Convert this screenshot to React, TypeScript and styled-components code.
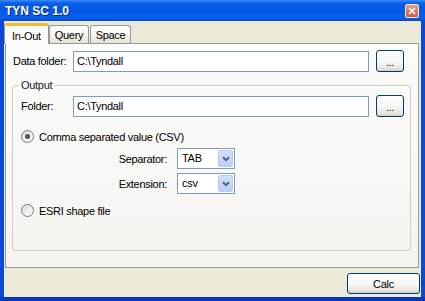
import React from "react";
import styled, { createGlobalStyle } from "styled-components";

const GlobalStyle = createGlobalStyle`
  html, body { margin: 0; padding: 0; background: #fff; }
  body {
    font-family: "Liberation Sans", Arial, sans-serif;
    font-size: 11px;
    letter-spacing: -0.3px;
    color: #000;
  }
  * { box-sizing: border-box; }
`;

const Window = styled.div`
  width: 425px;
  height: 301px;
  display: flex;
  flex-direction: column;
  background: #0a48d8;
  padding: 0 4px 0 4px;
  border-bottom: 4px solid #0637b8;
`;

const TitleBar = styled.div`
  margin: 0 -4px;
  height: 21px;
  display: flex;
  align-items: center;
  justify-content: space-between;
  padding: 0 6px 0 5px;
  background: linear-gradient(180deg, #3d8ef8 0%, #0b5fea 14%, #0355e4 50%, #0860ee 85%, #0448cf 100%);
`;

const Title = styled.span`
  color: #fff;
  font-weight: bold;
  font-size: 12px;
  letter-spacing: 0;
  text-shadow: 1px 1px 0 #0a2a8a;
`;

const CloseButton = styled.div`
  width: 14px;
  height: 14px;
  border: 1px solid #f4e6e0;
  border-radius: 2px;
  background: linear-gradient(180deg, #e7a08a 0%, #d8735a 60%, #c7624a 100%);
  display: flex;
  align-items: center;
  justify-content: center;
`;

const Client = styled.div`
  flex: 1;
  display: flex;
  flex-direction: column;
  background: #ece9d8;
`;

const TabRow = styled.div`
  height: 22px;
  display: flex;
  align-items: flex-end;
`;

const Tab = styled.div<{ $active?: boolean; $w: number; $gap?: number }>`
  width: ${(p) => p.$w}px;
  height: ${(p) => (p.$active ? 21 : 18)}px;
  margin-left: ${(p) => p.$gap ?? 0}px;
  margin-bottom: ${(p) => (p.$active ? -1 : 0)}px;
  position: relative;
  z-index: ${(p) => (p.$active ? 2 : 1)};
  display: flex;
  align-items: center;
  justify-content: center;
  padding-top: ${(p) => (p.$active ? 2 : 1)}px;
  border: 1px solid #919b9c;
  border-bottom: none;
  border-top: ${(p) => (p.$active ? "3px solid #f5b73c" : "1px solid #919b9c")};
  border-radius: 3px 3px 0 0;
  background: ${(p) =>
    p.$active ? "#fcfcfb" : "linear-gradient(180deg, #ffffff 0%, #f3f2ec 60%, #e4e1d4 100%)"};
`;

const Panel = styled.div`
  margin-left: 1px;
  width: 414px;
  height: 225px;
  border: 1px solid #919b9c;
  background: linear-gradient(180deg, #fcfcfb 0%, #f5f4ef 100%);
  padding: 6px 0 0 7px;
`;

const Row = styled.div<{ $top?: number }>`
  display: flex;
  align-items: center;
  margin-top: ${(p) => p.$top ?? 0}px;
`;

const FieldLabel = styled.span<{ $w: number; $right?: boolean; $pad?: number }>`
  width: ${(p) => p.$w}px;
  padding-left: ${(p) => p.$pad ?? 0}px;
  text-align: ${(p) => (p.$right ? "right" : "left")};
  margin-right: ${(p) => (p.$right ? 10 : 0)}px;
`;

const TextBox = styled.div`
  width: 296px;
  height: 21px;
  border: 1px solid #7f9db9;
  background: #fff;
  padding-left: 3px;
  line-height: 19px;
`;

const PushButton = styled.div<{ $w: number; $h: number; $left?: number }>`
  width: ${(p) => p.$w}px;
  height: ${(p) => p.$h}px;
  margin-left: ${(p) => p.$left ?? 0}px;
  border: 1px solid #003c74;
  border-radius: 3px;
  background: linear-gradient(180deg, #ffffff 0%, #f7f7f4 55%, #e8e5dc 85%, #d6d0c5 100%);
  display: flex;
  align-items: center;
  justify-content: center;
`;

const Dots = styled.span`
  font-size: 10px;
  padding-top: 3px;
`;

const Group = styled.fieldset`
  margin: 7px 0 0 -1px;
  width: 399px;
  border: 1px solid #d0d0bf;
  border-radius: 4px;
  padding: 3px 6px 33px 6px;
`;

const Legend = styled.legend`
  padding: 0 2px;
  line-height: 13px;
  color: #1a1a2a;
`;

const RadioRow = styled.div<{ $top: number }>`
  display: flex;
  align-items: center;
  height: 13px;
  margin-top: ${(p) => p.$top}px;
  margin-left: 2px;
  gap: 5px;
`;

const RadioCircle = styled.div<{ $checked?: boolean }>`
  width: 13px;
  height: 13px;
  border-radius: 50%;
  border: 1px solid #6b7e92;
  background: linear-gradient(135deg, #dcdcd7 0%, #ffffff 100%);
  display: flex;
  align-items: center;
  justify-content: center;

  &::after {
    content: "";
    display: ${(p) => (p.$checked ? "block" : "none")};
    width: 5px;
    height: 5px;
    border-radius: 50%;
    background: #4a5f4a;
  }
`;

const SelectBox = styled.div`
  width: 58px;
  height: 21px;
  border: 1px solid #7f9db9;
  background: #fff;
  padding: 1px;
  display: flex;
`;

const SelectValue = styled.span`
  flex: 1;
  padding-left: 3px;
  line-height: 17px;
`;

const ArrowButton = styled.div`
  width: 15px;
  border: 1px solid #b8cbf6;
  border-radius: 2px;
  background: linear-gradient(180deg, #d4e0fc 0%, #bccdf7 100%);
  display: flex;
  align-items: center;
  justify-content: center;
`;

const Footer = styled.div`
  flex: 1;
  display: flex;
  justify-content: flex-end;
  align-items: flex-start;
  padding: 5px 1px 0 0;
`;

const Chevron = () => (
  <svg width="8" height="6" viewBox="0 0 8 6">
    <path d="M1 1.2 L4 4.2 L7 1.2" fill="none" stroke="#4d6185" strokeWidth="2" />
  </svg>
);

const CloseX = () => (
  <svg width="8" height="8" viewBox="0 0 8 8">
    <path d="M1 1 L7 7 M7 1 L1 7" stroke="#fff" strokeWidth="1.6" />
  </svg>
);

const Dropdown = ({ value }: { value: string }) => (
  <SelectBox>
    <SelectValue>{value}</SelectValue>
    <ArrowButton>
      <Chevron />
    </ArrowButton>
  </SelectBox>
);

export default function App() {
  return (
    <>
      <GlobalStyle />
      <Window>
        <TitleBar>
          <Title>TYN SC 1.0</Title>
          <CloseButton>
            <CloseX />
          </CloseButton>
        </TitleBar>
        <Client>
          <TabRow>
            <Tab $active $w={45}>In-Out</Tab>
            <Tab $w={40}>Query</Tab>
            <Tab $w={41} $gap={1}>Space</Tab>
          </TabRow>
          <Panel>
            <Row>
              <FieldLabel $w={60}>Data folder:</FieldLabel>
              <TextBox>C:\Tyndall</TextBox>
              <PushButton $w={28} $h={22} $left={7}>
                <Dots>...</Dots>
              </PushButton>
            </Row>
            <Group>
              <Legend>Output</Legend>
              <Row>
                <FieldLabel $w={54} $pad={2}>Folder:</FieldLabel>
                <TextBox>C:\Tyndall</TextBox>
                <PushButton $w={28} $h={22} $left={7}>
                  <Dots>...</Dots>
                </PushButton>
              </Row>
              <RadioRow $top={13}>
                <RadioCircle $checked />
                <span>Comma separated value (CSV)</span>
              </RadioRow>
              <Row $top={5}>
                <FieldLabel $w={148} $right>Separator:</FieldLabel>
                <Dropdown value="TAB" />
              </Row>
              <Row $top={4}>
                <FieldLabel $w={148} $right>Extension:</FieldLabel>
                <Dropdown value="csv" />
              </Row>
              <RadioRow $top={10}>
                <RadioCircle />
                <span>ESRI shape file</span>
              </RadioRow>
            </Group>
          </Panel>
          <Footer>
            <PushButton $w={73} $h={21}>Calc</PushButton>
          </Footer>
        </Client>
      </Window>
    </>
  );
}
